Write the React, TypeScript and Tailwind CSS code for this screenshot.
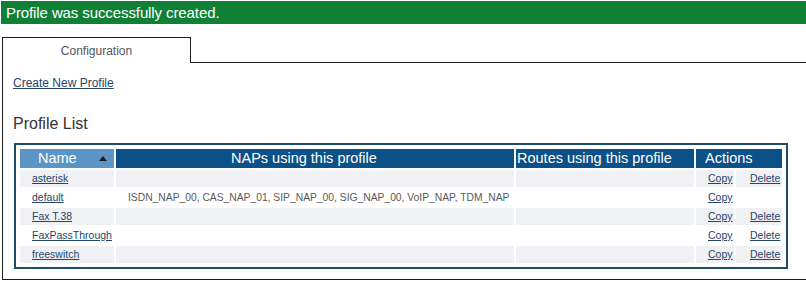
const rows = [
  { name: "asterisk", naps: "", del: true },
  { name: "default", naps: "ISDN_NAP_00, CAS_NAP_01, SIP_NAP_00, SIG_NAP_00, VoIP_NAP, TDM_NAP", del: false },
  { name: "Fax T.38", naps: "", del: true },
  { name: "FaxPassThrough", naps: "", del: true },
  { name: "freeswitch", naps: "", del: true },
];

function SortArrow() {
  return (
    <svg width="8" height="5" viewBox="0 0 8 5" className="block">
      <path d="M0 5 L4 0 L8 5 Z" fill="#1a1a1a" />
    </svg>
  );
}

export default function App() {
  return (
    <div className="w-[806px] h-[290px] bg-white overflow-hidden font-['Liberation_Sans',Arial,sans-serif]">
      <div className="mt-[1px] ml-[1px] h-[23px] bg-[#108037] pl-[5px] text-[15px] leading-[23px] tracking-[-0.1px] text-white">
        Profile was successfully created.
      </div>

      <div className="mt-[13px] flex">
        <div className="ml-[2px] w-[189px] h-[26px] border-t border-l border-r border-[#1e1e1e] flex items-center justify-center text-[12px] text-[#555]">
          Configuration
        </div>
        <div className="flex-1 border-b border-[#1e1e1e]" />
      </div>

      <div className="ml-[2px] h-[217px] border-l border-b border-[#1e1e1e] pl-[10px]">
        <div className="pt-[13px] text-[12px] leading-[14px]">
          <a href="#" className="text-[#26456a] underline">
            Create New Profile
          </a>
        </div>
        <div className="mt-[25px] text-[16px] leading-[18px] text-[#333]">Profile List</div>

        <div className="mt-[10px] ml-[1px] w-[774px] border-2 border-[#1f4c66] p-[4px]">
          <div className="grid grid-cols-[94px_398px_178px_38px_46px] gap-[2px] text-[10.5px] leading-[13px]">
            <div className="h-[19px] bg-[#5b95c5] flex items-center justify-between pl-[18px] pr-[7px] text-[14.5px] text-white">
              <span>Name</span>
              <SortArrow />
            </div>
            <div className="h-[19px] bg-[#0b5188] flex items-center pl-[115px] text-[14.5px] text-white">
              NAPs using this profile
            </div>
            <div className="h-[19px] bg-[#0b5188] flex items-center pl-[1px] text-[14.5px] text-white whitespace-nowrap">
              Routes using this profile
            </div>
            <div className="col-span-2 h-[19px] bg-[#0b5188] flex items-center pl-[9px] text-[14.5px] text-white">
              Actions
            </div>

            {rows.map((r, i) => {
              const bg = i % 2 === 0 ? "bg-[#eff1f4]" : "bg-white";
              return [
                <div key={r.name + "n"} className={`h-[17px] ${bg} flex items-center pl-[12px]`}>
                  <a href="#" className="text-[#26456a] underline whitespace-nowrap">{r.name}</a>
                </div>,
                <div key={r.name + "p"} className={`h-[17px] ${bg} flex items-center pl-[12px] text-[10.3px] text-[#5a5a5a] whitespace-nowrap`}>
                  {r.naps}
                </div>,
                <div key={r.name + "r"} className={`h-[17px] ${bg}`} />,
                <div key={r.name + "c"} className={`h-[17px] ${bg} flex items-center pl-[12px]`}>
                  <a href="#" className="text-[#26456a] underline">Copy</a>
                </div>,
                <div key={r.name + "d"} className={`h-[17px] ${r.del ? bg : "bg-white"} flex items-center pl-[14px]`}>
                  {r.del && <a href="#" className="text-[#26456a] underline">Delete</a>}
                </div>,
              ];
            })}
          </div>
        </div>
      </div>
    </div>
  );
}
